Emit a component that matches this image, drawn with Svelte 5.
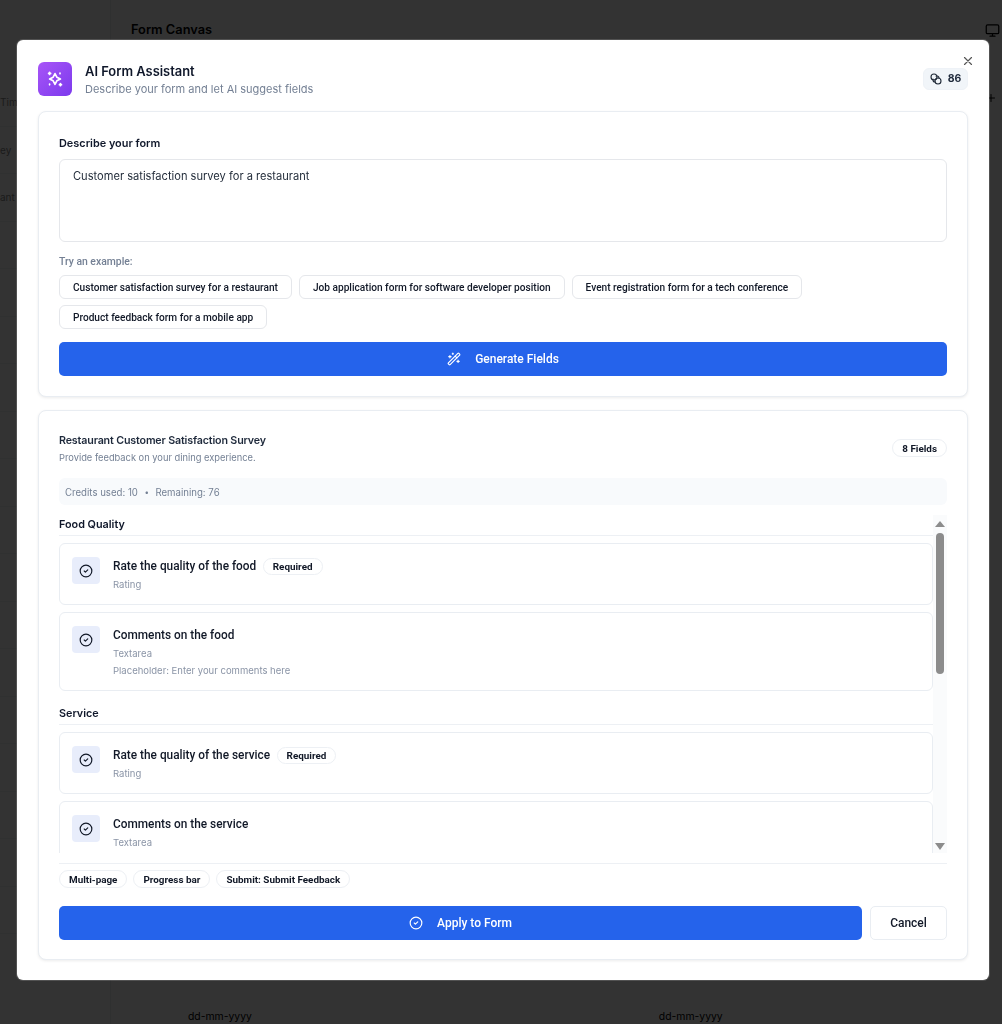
<script>
  const examples = ['Customer satisfaction survey for a restaurant', 'Job application form for software developer position', 'Event registration form for a tech conference', 'Product feedback form for a mobile app'];
  const sections = [
    { name: 'Food Quality', fields: [
      { label: 'Rate the quality of the food', required: true, type: 'Rating' },
      { label: 'Comments on the food', type: 'Textarea', ph: 'Placeholder: Enter your comments here' }
    ]},
    { name: 'Service', fields: [
      { label: 'Rate the quality of the service', required: true, type: 'Rating' },
      { label: 'Comments on the service', type: 'Textarea' }
    ]}
  ];
  const sideRows = ['Time', 'ey', 'ant', '', '', '', '', '', '', '', '', '', '', '', '', '', '', ''];
</script>

<div class="page">
  <aside class="side">
    {#each sideRows as r}<div class="side-row">{r}</div>{/each}
  </aside>
  <main class="canvas">
    <div class="canvas-head">
      <h2>Form Canvas</h2>
      <svg class="monitor" viewBox="0 0 24 24" width="15" height="15" fill="none" stroke="#000" stroke-width="2" stroke-linecap="round" stroke-linejoin="round"><rect x="2" y="3" width="20" height="14" rx="2"/><path d="M8 21h8M12 17v4"/></svg>
    </div>
    <svg class="plus" viewBox="0 0 24 24" width="12" height="12" fill="none" stroke="#000" stroke-width="2" stroke-linecap="round"><path d="M5 12h14M12 5v14"/></svg>
    <div class="dates"><span>dd-mm-yyyy</span><span>dd-mm-yyyy</span></div>
  </main>
</div>

<div class="overlay">
  <div class="dialog">
    <button class="close" aria-label="Close">
      <svg viewBox="0 0 24 24" width="14" height="14" fill="none" stroke="#555" stroke-width="2" stroke-linecap="round"><path d="M18 6 6 18M6 6l12 12"/></svg>
    </button>
    <header class="head">
      <div class="logo">
        <svg viewBox="0 0 24 24" width="20" height="20" fill="none" stroke="#fff" stroke-width="2" stroke-linecap="round" stroke-linejoin="round"><path d="M12 5.500 14.200 9.800 18.500 12 14.200 14.200 12 18.500 9.800 14.200 5.500 12 9.800 9.800z"/><path d="M5.500 4v2.500M4.300 5.300h2.500M18.500 17.500v2.500M17.300 18.800h2.500M5.500 18v1M18 4.800v1"/></svg>
      </div>
      <div class="titles">
        <h1>AI Form Assistant</h1>
        <p>Describe your form and let AI suggest fields</p>
      </div>
      <div class="credits">
        <svg viewBox="0 0 24 24" width="12" height="12" fill="none" stroke="#1f2937" stroke-width="2.200" stroke-linecap="round" stroke-linejoin="round"><circle cx="8" cy="8" r="6"/><circle cx="16" cy="16" r="6"/><path d="M12 6h2a4 4 0 0 1 4 4M6 12v2a4 4 0 0 0 4 4"/></svg>
        <span>86</span>
      </div>
    </header>

    <section class="card one">
      <div class="lab">Describe your form</div>
      <div class="area">Customer satisfaction survey for a restaurant</div>
      <div class="try">Try an example:</div>
      <div class="chips">
        {#each examples as c}<button class="chip">{c}</button>{/each}
      </div>
      <button class="primary gen">
        <svg viewBox="0 0 24 24" width="14" height="14" fill="none" stroke="#fff" stroke-width="2" stroke-linecap="round" stroke-linejoin="round"><path d="m21.640 3.640-1.280-1.280a1.210 1.210 0 0 0-1.720 0L2.360 18.640a1.210 1.210 0 0 0 0 1.720l1.280 1.280a1.200 1.200 0 0 0 1.720 0L21.640 5.360a1.200 1.200 0 0 0 0-1.720"/><path d="m14 7 3 3M5 6v4M19 14v4M10 2v2M7 8H3M21 16h-4M11 3H9"/></svg>
        <span>Generate Fields</span>
      </button>
    </section>

    <section class="card two">
      <div class="res-head">
        <div>
          <h3>Restaurant Customer Satisfaction Survey</h3>
          <p>Provide feedback on your dining experience.</p>
        </div>
        <span class="pill count">8 Fields</span>
      </div>
      <div class="usage"><span>Credits used: 10</span><span class="dot">•</span><span>Remaining: 76</span></div>
      <div class="scroll-wrap">
        <div class="list">
          {#each sections as s, i}
            <div class="sec-name" class:later={i > 0}>{s.name}</div>
            {#each s.fields as f}
              <div class="field">
                <div class="ficon">
                  <svg viewBox="0 0 24 24" width="14" height="14" fill="none" stroke="#111827" stroke-width="2" stroke-linecap="round" stroke-linejoin="round"><circle cx="12" cy="12" r="10"/><path d="m9 12 2 2 4-4"/></svg>
                </div>
                <div class="ftext">
                  <div class="fname"><span>{f.label}</span>{#if f.required}<span class="pill req">Required</span>{/if}</div>
                  <div class="ftype">{f.type}</div>
                  {#if f.ph}<div class="fph">{f.ph}</div>{/if}
                </div>
              </div>
            {/each}
          {/each}
        </div>
        <div class="bar">
          <i class="up"></i>
          <b class="thumb"></b>
          <i class="down"></i>
        </div>
      </div>
      <div class="tags">
        <span class="pill">Multi-page</span>
        <span class="pill">Progress bar</span>
        <span class="pill">Submit: Submit Feedback</span>
      </div>
      <div class="actions">
        <button class="primary apply">
          <svg viewBox="0 0 24 24" width="14" height="14" fill="none" stroke="#fff" stroke-width="2" stroke-linecap="round" stroke-linejoin="round"><circle cx="12" cy="12" r="10"/><path d="m9 12 2 2 4-4"/></svg>
          <span>Apply to Form</span>
        </button>
        <button class="cancel">Cancel</button>
      </div>
    </section>
  </div>
</div>

<style>
  :global(body) { margin: 0; background: #fff; font-family: Inter, "Liberation Sans", sans-serif; color: #000; }
  * { box-sizing: border-box; }
  h1, h2, h3, p { margin: 0; }
  button { font: inherit; cursor: pointer; }

  .page { display: flex; height: 1024px; overflow: hidden; }
  .side { width: 111px; padding-top: 79px; font-size: 10px; color: #888; border-right: 1px solid #eceef1; flex: none; }
  .side-row { height: 47.500px; line-height: 47px; border-bottom: 1px solid #f1f2f4; }
  .canvas { flex: 1; padding: 22px 20px 0; display: flex; flex-direction: column; min-width: 0; }
  .canvas-head { display: flex; justify-content: space-between; align-items: center; margin-right: -20px; padding-right: 2px; }
  .canvas-head h2 { font-size: 12.800px; font-weight: 600; line-height: 16px; }
  .plus { align-self: flex-end; margin: 54px -15px 0 0; }
  .dates { display: flex; gap: 407px; margin-top: auto; padding-left: 57px; font-size: 10.400px; line-height: 14px; padding-bottom: 0; }

  .overlay { position: fixed; inset: 0; background: rgba(0, 0, 0, .8); }
  .dialog { position: absolute; left: 17px; top: 40px; width: 972px; height: 940px; background: #fff; border-radius: 6px; padding: 22px 21px 20px; display: flex; flex-direction: column; box-shadow: 0 0 0 1px rgba(255,255,255,.15); }
  .close { position: absolute; right: 14px; top: 14px; width: 14px; height: 14px; padding: 0; border: 0; background: none; display: flex; }

  .head { display: flex; align-items: center; height: 34px; gap: 13px; margin-bottom: 15px; }
  .logo { width: 34px; height: 34px; border-radius: 6px; background: linear-gradient(135deg, #a855f7, #7c3aed); display: flex; align-items: center; justify-content: center; }
  .titles { flex: 1; margin-top: 1px; }
  .titles h1 { font-size: 12.900px; line-height: 18px; padding-top: 1px; font-weight: 600; color: #0f172a; }
  .titles p { font-size: 11px; line-height: 18px; margin-top: -1px; color: #748094; }
  .credits { width: 45px; height: 22px; border-radius: 6px; background: #f1f5f9; border: 1px solid #eef2f7; display: flex; align-items: center; justify-content: center; gap: 6px; font: 700 10.500px Inter, sans-serif; color: #1e293b; margin-top: -1px; }

  .card { border: 1px solid #e9edf2; border-radius: 8px; background: #fff; box-shadow: 0 1px 3px rgba(0,0,0,.08); padding: 0 20px; }
  .one { height: 286px; padding-top: 23px; margin-bottom: 13px; }
  .lab { font-size: 10.900px; font-weight: 600; line-height: 17px; color: #0f172a; }
  .area { margin-top: 7px; height: 83px; border: 1px solid #e5e7eb; border-radius: 6px; padding: 7px 13px; font-size: 11.100px; line-height: 18px; color: #1f2937; }
  .try { margin-top: 13px; font-family: Roboto, sans-serif; font-size: 10.400px; font-weight: 500; line-height: 14px; color: #748094; }
  .chips { display: flex; flex-wrap: wrap; gap: 6px 7px; margin-top: 6px; width: 800px; }
  .chip { height: 24px; padding: 0 13px; border: 1px solid #e5e7eb; border-radius: 6px; background: #fff; font: 500 10.150px Roboto, sans-serif; color: #111827; white-space: nowrap; }
  .primary { border: 0; height: 34px; border-radius: 5px; background: #2563eb; color: #fff; display: flex; align-items: center; justify-content: center; gap: 14px; font: 500 12px Roboto, sans-serif; }
  .gen { width: 100%; margin-top: 13px; }

  .two { flex: 1; padding-top: 21px; display: flex; flex-direction: column; min-height: 0; }
  .res-head { display: flex; justify-content: space-between; align-items: center; height: 33px; }
  .res-head h3 { font-size: 10.700px; line-height: 16px; padding-top: 1px; font-weight: 600; color: #1e293b; letter-spacing: -.15px; }
  .res-head p { font-size: 9.300px; line-height: 16px; color: #748094; margin-top: 1px; }
  .pill { display: inline-flex; align-items: center; height: 18px; padding: 0 9px; border: 1px solid #edf0f4; border-radius: 9px; background: #fff; font: 700 9.900px Roboto, sans-serif; color: #111827; white-space: nowrap; }
  .count { margin-top: -1px; }
  .usage { margin-top: 13px; height: 27px; border-radius: 6px; background: #f8fafc; display: flex; align-items: center; gap: 5.500px; padding: 1px 0 0 6px; font-size: 9.650px; color: #748094; }
  .dot { font-size: 8px; padding: 0 1px; }

  .scroll-wrap { display: flex; height: 338px; margin-top: 10px; overflow: hidden; flex: none; }
  .list { flex: 1; min-width: 0; overflow: hidden; }
  .sec-name { font-size: 10.800px; font-weight: 600; color: #0f172a; line-height: 16px; padding: 2px 0 2px; border-bottom: 1px solid #edf0f4; margin-bottom: 7px; }
  .sec-name.later { padding: 8px 0 2px; }
  .field { display: flex; gap: 13px; border: 1px solid #e9edf2; border-radius: 6px; padding: 13px 12px 12px; margin-bottom: 7px; }
  .ficon { width: 28px; height: 27px; flex: none; border-radius: 4px; background: #e8edfb; display: flex; align-items: center; justify-content: center; }
  .fname { display: flex; align-items: center; gap: 6.500px; height: 18px; font: 500 11.850px Roboto, sans-serif; color: #111827; }
  .req { height: 17px; }
  .ftype { margin-top: 3px; font-size: 9.500px; line-height: 14px; color: #8a94a6; }
  .fph { margin-top: 3px; font-size: 9.500px; line-height: 14px; color: #8a94a6; }
  .bar { width: 14px; flex: none; background: #fafbfc; position: relative; }
  .up, .down { width: 0; height: 0; border-left: 5px solid transparent; border-right: 5px solid transparent; position: absolute; left: 2px; }
  .up { top: 6px; border-bottom: 6px solid #8c8c8c; }
  .down { bottom: 3px; border-top: 7px solid #8c8c8c; }
  .thumb { position: absolute; top: 18px; left: 3px; width: 8px; height: 141px; border-radius: 4px; background: #8c8c8c; }

  .tags { display: flex; gap: 6px; margin-top: 10px; padding-top: 6px; border-top: 1px solid #edf0f4; }
  .actions { display: flex; gap: 8px; margin-top: 18px; }
  .apply { flex: 1; }
  .cancel { width: 77px; height: 34px; border: 1px solid #e9edf2; border-radius: 5px; background: #fff; font: 500 12px Roboto, sans-serif; color: #111827; }
</style>
